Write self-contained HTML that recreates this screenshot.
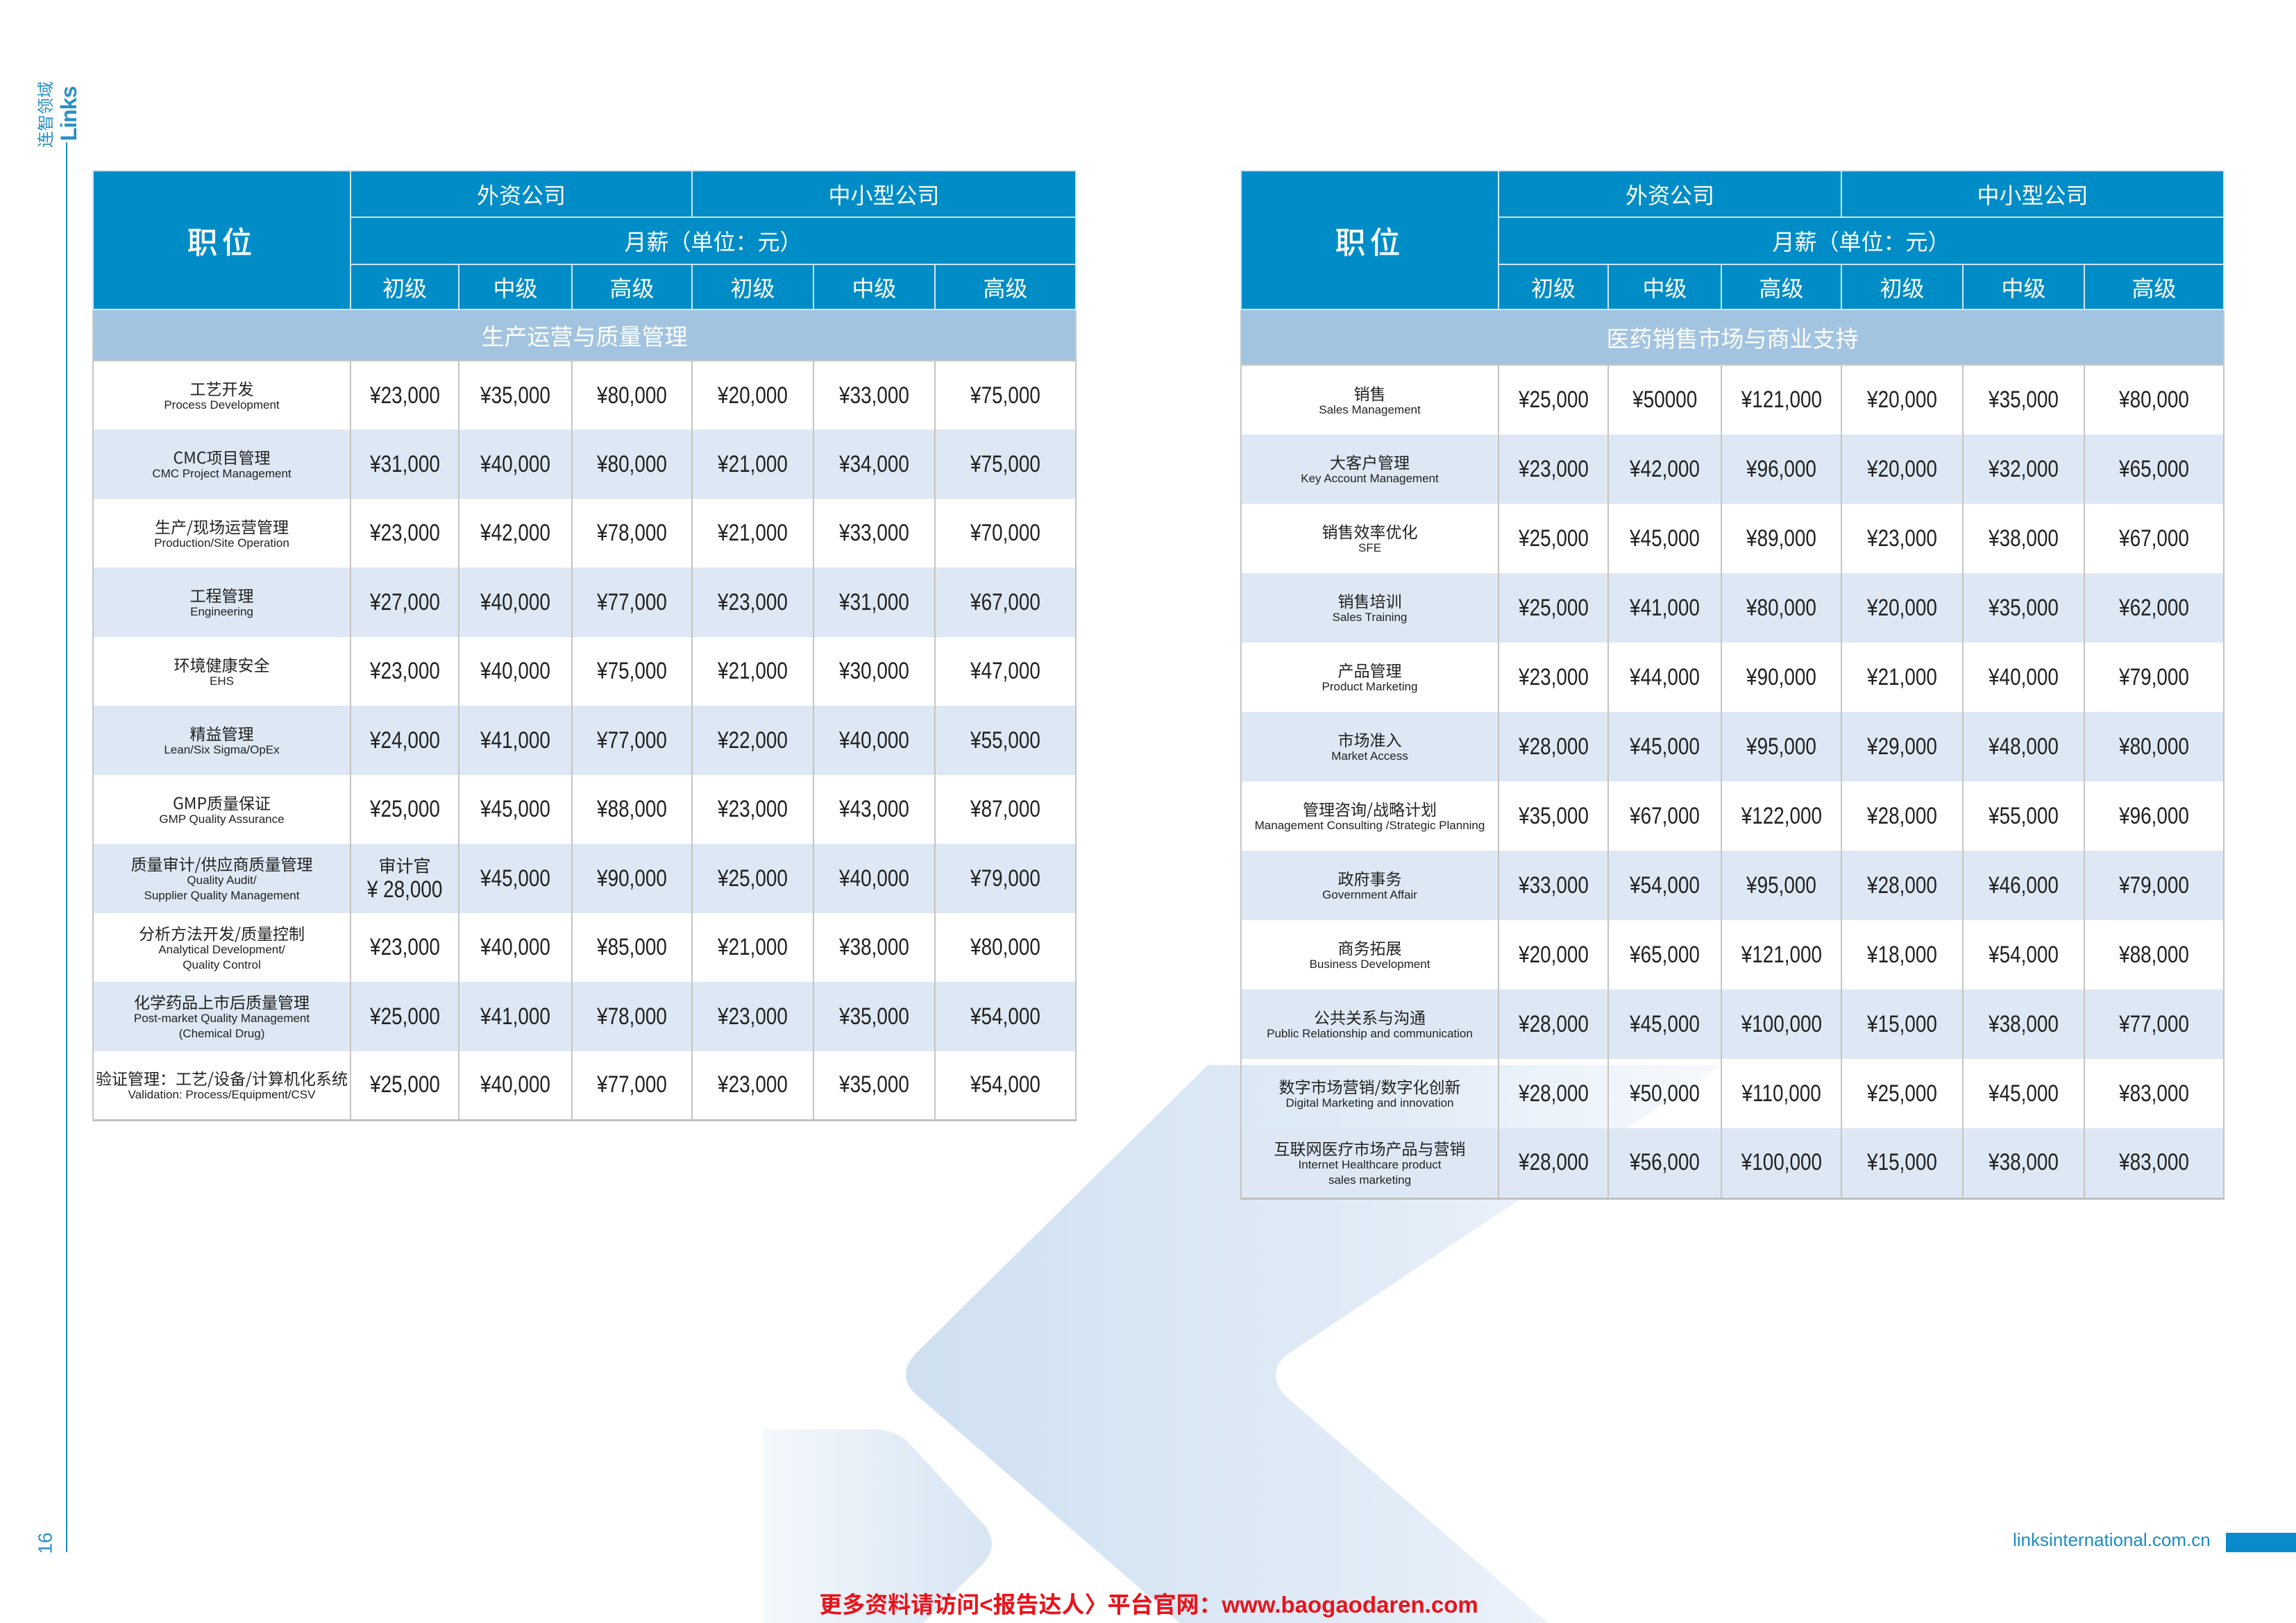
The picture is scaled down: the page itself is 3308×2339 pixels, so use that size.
<!DOCTYPE html>
<html><head><meta charset="utf-8">
<style>
html,body{margin:0;padding:0;}
body{width:3308px;height:2339px;position:relative;overflow:hidden;background:#fff;font-family:"Liberation Sans","Noto Sans CJK SC",sans-serif;}
table{position:absolute;border-collapse:collapse;table-layout:fixed;}
td{padding:0;text-align:center;vertical-align:middle;}
.h td{background:#008dc7;color:#fff;font-family:"Noto Sans CJK SC",sans-serif;border:2px solid #cfe6f3;}
.h1{font-size:32px;}
.pos{font-size:44px;font-weight:500;letter-spacing:6px;}
.sec td{background:#a3c4e0;color:#fff;font-family:"Noto Sans CJK SC",sans-serif;font-size:33px;border:2px solid #c8c8c8;border-top:none;}
.d td{border:2px solid #c4c4c4;border-top:none;border-bottom:none;font-size:34px;color:#222;}
.d td span{display:inline-block;transform:scaleX(0.82);white-space:nowrap;}
.d.b td{background:#dde8f4;}
.d:last-child td{border-bottom:3px solid #c0c0c0;}
.cn{font-family:"Noto Sans CJK SC",sans-serif;font-size:23px;line-height:28px;color:#222;}
.en{font-size:17px;line-height:22px;color:#222;}
</style></head><body>
<svg width="3308" height="2339" style="position:absolute;left:0;top:0" xmlns="http://www.w3.org/2000/svg">
<defs>
<linearGradient id="g1" x1="0" y1="0" x2="1" y2="0"><stop offset="0" stop-color="#cfe0f1"/><stop offset="0.6" stop-color="#e2ecf7"/><stop offset="1" stop-color="#f6f9fd"/></linearGradient>
<linearGradient id="g2" x1="0" y1="0" x2="1" y2="0"><stop offset="0" stop-color="#f4f8fc"/><stop offset="1" stop-color="#d7e5f3"/></linearGradient>
</defs>
<path d="M1740 1535 L2480 1535 L1850 1955 Q1826 1981 1850 2010 L2230 2339 L1700 2339 L1320 2010 Q1290 1982 1320 1950 Z" fill="url(#g1)"/>
<path d="M1100 2060 L1260 2060 Q1290 2060 1310 2080 L1420 2200 Q1440 2230 1415 2255 L1330 2339 L1100 2339 Z" fill="url(#g2)"/>
<line x1="96" y1="205" x2="96" y2="2237" stroke="#1b8cc2" stroke-width="2"/>
</svg>
<div style="position:absolute;left:4px;top:152px;width:120px;height:26px;font-family:'Noto Sans CJK SC',sans-serif;font-size:24px;line-height:26px;color:#2a8fc4;transform:rotate(-90deg);text-align:center;white-space:nowrap;">连智领域</div>
<div style="position:absolute;left:49px;top:147px;width:100px;height:34px;font-family:'Liberation Sans',sans-serif;font-size:32px;line-height:34px;font-weight:bold;color:#2a8fc4;transform:rotate(-90deg);text-align:center;letter-spacing:-1px;">Links</div>
<div style="position:absolute;left:50px;top:2208px;font-family:'Liberation Sans',sans-serif;font-size:28px;color:#2a8fc4;transform:rotate(-90deg);">16</div>
<div style="position:absolute;left:2900px;top:2204px;font-family:'Liberation Sans',sans-serif;font-size:26px;color:#1a8cc2;">linksinternational.com.cn</div>
<div style="position:absolute;left:3207px;top:2209px;width:101px;height:28px;background:#0a8bcb;"></div>
<div style="position:absolute;left:1180px;top:2286px;width:950px;text-align:center;font-family:'Liberation Sans','Noto Sans CJK SC',sans-serif;font-size:33px;font-weight:bold;color:#e8141b;white-space:nowrap;">更多资料请访问&lt;报告达人〉平台官网：www.baogaodaren.com</div>

<table style="left:133px;top:245px;width:1416px;">
<colgroup><col style="width:371px"><col style="width:156px"><col style="width:163px"><col style="width:173px"><col style="width:175px"><col style="width:175px"><col style="width:203px"></colgroup>
<tr class="h" style="height:67px"><td rowspan="3" class="pos">职位</td><td colspan="3" class="h1">外资公司</td><td colspan="3" class="h1">中小型公司</td></tr>
<tr class="h" style="height:68px"><td colspan="6" class="h1">月薪（单位：元）</td></tr>
<tr class="h" style="height:65px"><td class="h1">初级</td><td class="h1">中级</td><td class="h1">高级</td><td class="h1">初级</td><td class="h1">中级</td><td class="h1">高级</td></tr>
<tr class="sec" style="height:74px"><td colspan="7">生产运营与质量管理</td></tr>
<tr class="d" style="height:99px"><td><div class="cn">工艺开发</div><div class="en">Process Development</div></td><td><span>¥23,000</span></td><td><span>¥35,000</span></td><td><span>¥80,000</span></td><td><span>¥20,000</span></td><td><span>¥33,000</span></td><td><span>¥75,000</span></td></tr>
<tr class="d b" style="height:100px"><td><div class="cn">CMC项目管理</div><div class="en">CMC Project Management</div></td><td><span>¥31,000</span></td><td><span>¥40,000</span></td><td><span>¥80,000</span></td><td><span>¥21,000</span></td><td><span>¥34,000</span></td><td><span>¥75,000</span></td></tr>
<tr class="d" style="height:99px"><td><div class="cn">生产/现场运营管理</div><div class="en">Production/Site Operation</div></td><td><span>¥23,000</span></td><td><span>¥42,000</span></td><td><span>¥78,000</span></td><td><span>¥21,000</span></td><td><span>¥33,000</span></td><td><span>¥70,000</span></td></tr>
<tr class="d b" style="height:100px"><td><div class="cn">工程管理</div><div class="en">Engineering</div></td><td><span>¥27,000</span></td><td><span>¥40,000</span></td><td><span>¥77,000</span></td><td><span>¥23,000</span></td><td><span>¥31,000</span></td><td><span>¥67,000</span></td></tr>
<tr class="d" style="height:99px"><td><div class="cn">环境健康安全</div><div class="en">EHS</div></td><td><span>¥23,000</span></td><td><span>¥40,000</span></td><td><span>¥75,000</span></td><td><span>¥21,000</span></td><td><span>¥30,000</span></td><td><span>¥47,000</span></td></tr>
<tr class="d b" style="height:100px"><td><div class="cn">精益管理</div><div class="en">Lean/Six Sigma/OpEx</div></td><td><span>¥24,000</span></td><td><span>¥41,000</span></td><td><span>¥77,000</span></td><td><span>¥22,000</span></td><td><span>¥40,000</span></td><td><span>¥55,000</span></td></tr>
<tr class="d" style="height:99px"><td><div class="cn">GMP质量保证</div><div class="en">GMP Quality Assurance</div></td><td><span>¥25,000</span></td><td><span>¥45,000</span></td><td><span>¥88,000</span></td><td><span>¥23,000</span></td><td><span>¥43,000</span></td><td><span>¥87,000</span></td></tr>
<tr class="d b" style="height:100px"><td><div class="cn">质量审计/供应商质量管理</div><div class="en">Quality Audit/<br>Supplier Quality Management</div></td><td><div class="cn" style="font-size:25px;line-height:32px">审计官</div><div style="line-height:38px"><span>¥ 28,000</span></div></td><td><span>¥45,000</span></td><td><span>¥90,000</span></td><td><span>¥25,000</span></td><td><span>¥40,000</span></td><td><span>¥79,000</span></td></tr>
<tr class="d" style="height:99px"><td><div class="cn">分析方法开发/质量控制</div><div class="en">Analytical Development/<br>Quality Control</div></td><td><span>¥23,000</span></td><td><span>¥40,000</span></td><td><span>¥85,000</span></td><td><span>¥21,000</span></td><td><span>¥38,000</span></td><td><span>¥80,000</span></td></tr>
<tr class="d b" style="height:100px"><td><div class="cn">化学药品上市后质量管理</div><div class="en">Post-market Quality Management<br>(Chemical Drug)</div></td><td><span>¥25,000</span></td><td><span>¥41,000</span></td><td><span>¥78,000</span></td><td><span>¥23,000</span></td><td><span>¥35,000</span></td><td><span>¥54,000</span></td></tr>
<tr class="d" style="height:99px"><td><div class="cn">验证管理：工艺/设备/计算机化系统</div><div class="en">Validation: Process/Equipment/CSV</div></td><td><span>¥25,000</span></td><td><span>¥40,000</span></td><td><span>¥77,000</span></td><td><span>¥23,000</span></td><td><span>¥35,000</span></td><td><span>¥54,000</span></td></tr>
</table>

<table style="left:1787px;top:245px;width:1416px;">
<colgroup><col style="width:371px"><col style="width:158px"><col style="width:163px"><col style="width:173px"><col style="width:175px"><col style="width:175px"><col style="width:201px"></colgroup>
<tr class="h" style="height:67px"><td rowspan="3" class="pos">职位</td><td colspan="3" class="h1">外资公司</td><td colspan="3" class="h1">中小型公司</td></tr>
<tr class="h" style="height:68px"><td colspan="6" class="h1">月薪（单位：元）</td></tr>
<tr class="h" style="height:65px"><td class="h1">初级</td><td class="h1">中级</td><td class="h1">高级</td><td class="h1">初级</td><td class="h1">中级</td><td class="h1">高级</td></tr>
<tr class="sec" style="height:80px"><td colspan="7">医药销售市场与商业支持</td></tr>
<tr class="d" style="height:100px"><td><div class="cn">销售</div><div class="en">Sales Management</div></td><td><span>¥25,000</span></td><td><span>¥50000</span></td><td><span>¥121,000</span></td><td><span>¥20,000</span></td><td><span>¥35,000</span></td><td><span>¥80,000</span></td></tr>
<tr class="d b" style="height:100px"><td><div class="cn">大客户管理</div><div class="en">Key Account Management</div></td><td><span>¥23,000</span></td><td><span>¥42,000</span></td><td><span>¥96,000</span></td><td><span>¥20,000</span></td><td><span>¥32,000</span></td><td><span>¥65,000</span></td></tr>
<tr class="d" style="height:100px"><td><div class="cn">销售效率优化</div><div class="en">SFE</div></td><td><span>¥25,000</span></td><td><span>¥45,000</span></td><td><span>¥89,000</span></td><td><span>¥23,000</span></td><td><span>¥38,000</span></td><td><span>¥67,000</span></td></tr>
<tr class="d b" style="height:100px"><td><div class="cn">销售培训</div><div class="en">Sales Training</div></td><td><span>¥25,000</span></td><td><span>¥41,000</span></td><td><span>¥80,000</span></td><td><span>¥20,000</span></td><td><span>¥35,000</span></td><td><span>¥62,000</span></td></tr>
<tr class="d" style="height:100px"><td><div class="cn">产品管理</div><div class="en">Product Marketing</div></td><td><span>¥23,000</span></td><td><span>¥44,000</span></td><td><span>¥90,000</span></td><td><span>¥21,000</span></td><td><span>¥40,000</span></td><td><span>¥79,000</span></td></tr>
<tr class="d b" style="height:100px"><td><div class="cn">市场准入</div><div class="en">Market Access</div></td><td><span>¥28,000</span></td><td><span>¥45,000</span></td><td><span>¥95,000</span></td><td><span>¥29,000</span></td><td><span>¥48,000</span></td><td><span>¥80,000</span></td></tr>
<tr class="d" style="height:100px"><td><div class="cn">管理咨询/战略计划</div><div class="en">Management Consulting /Strategic Planning</div></td><td><span>¥35,000</span></td><td><span>¥67,000</span></td><td><span>¥122,000</span></td><td><span>¥28,000</span></td><td><span>¥55,000</span></td><td><span>¥96,000</span></td></tr>
<tr class="d b" style="height:100px"><td><div class="cn">政府事务</div><div class="en">Government Affair</div></td><td><span>¥33,000</span></td><td><span>¥54,000</span></td><td><span>¥95,000</span></td><td><span>¥28,000</span></td><td><span>¥46,000</span></td><td><span>¥79,000</span></td></tr>
<tr class="d" style="height:100px"><td><div class="cn">商务拓展</div><div class="en">Business Development</div></td><td><span>¥20,000</span></td><td><span>¥65,000</span></td><td><span>¥121,000</span></td><td><span>¥18,000</span></td><td><span>¥54,000</span></td><td><span>¥88,000</span></td></tr>
<tr class="d b" style="height:100px"><td><div class="cn">公共关系与沟通</div><div class="en">Public Relationship and communication</div></td><td><span>¥28,000</span></td><td><span>¥45,000</span></td><td><span>¥100,000</span></td><td><span>¥15,000</span></td><td><span>¥38,000</span></td><td><span>¥77,000</span></td></tr>
<tr class="d" style="height:100px"><td><div class="cn">数字市场营销/数字化创新</div><div class="en">Digital Marketing and innovation</div></td><td><span>¥28,000</span></td><td><span>¥50,000</span></td><td><span>¥110,000</span></td><td><span>¥25,000</span></td><td><span>¥45,000</span></td><td><span>¥83,000</span></td></tr>
<tr class="d b" style="height:101px"><td><div class="cn">互联网医疗市场产品与营销</div><div class="en">Internet Healthcare product<br>sales marketing</div></td><td><span>¥28,000</span></td><td><span>¥56,000</span></td><td><span>¥100,000</span></td><td><span>¥15,000</span></td><td><span>¥38,000</span></td><td><span>¥83,000</span></td></tr>
</table>
</body></html>
